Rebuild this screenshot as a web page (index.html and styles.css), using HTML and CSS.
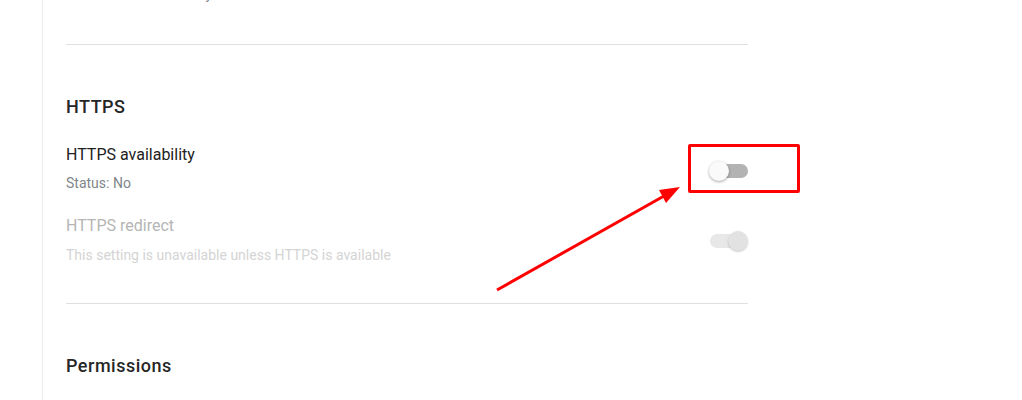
FILE: index.html
```html
<!DOCTYPE html>
<html lang="en">
<head>
    <meta charset="utf-8" />
    <title>Settings - HTTPS</title>
    <link rel="stylesheet" href="styles.css">
</head>
<body>
    <div class="page">
        <div class="rail"></div>

        <div class="main">
            <div class="cut-line">Redirects automatically</div>
            <hr class="divider" />

            <section class="group">
                <h2 class="group-title">HTTPS</h2>

                <div class="setting">
                    <div class="setting-text">
                        <div class="setting-name">HTTPS availability</div>
                        <div class="setting-desc">Status: No</div>
                    </div>
                    <div class="switch">
                        <span class="track"></span>
                        <span class="thumb"></span>
                    </div>
                </div>

                <div class="setting disabled">
                    <div class="setting-text">
                        <div class="setting-name">HTTPS redirect</div>
                        <div class="setting-desc">This setting is unavailable unless HTTPS is available</div>
                    </div>
                    <div class="switch on">
                        <span class="track"></span>
                        <span class="thumb"></span>
                    </div>
                </div>
            </section>

            <hr class="divider" />

            <section class="group">
                <h2 class="group-title">Permissions</h2>
            </section>
        </div>
    </div>

    <!-- screenshot annotation -->
    <div class="mark-box"></div>
    <svg class="mark-arrow" width="1022" height="400" viewBox="0 0 1022 400">
        <line x1="497" y1="290" x2="664" y2="196" stroke="#ff0000" stroke-width="3" />
        <polygon points="680,187 659,190 666,203" fill="#ff0000" />
    </svg>
</body>
</html>
```

FILE: styles.css
```css
body {
    margin: 0;
    background: #fff;
    font-family: Roboto, "Liberation Sans", sans-serif;
    color: #212121;
}

.page {
    display: flex;
    min-height: 400px;
}

.rail {
    width: 42px;
    border-right: 1px solid #ececec;
}

.main {
    width: 682px;
    padding-left: 23px;
}

.cut-line {
    margin-top: -16px;
    font-size: 14px;
    line-height: 20px;
    color: #80868b;
    height: 18px;
    overflow: hidden;
}

.divider {
    border: 0;
    border-top: 1px solid #e0e0e0;
    margin: 38px 0 0 0;
}

.cut-line + .divider {
    margin-top: 42px;
}

.group {
    padding-top: 50px;
}

.group-title {
    margin: 0;
    font-size: 18px;
    line-height: 24px;
    font-weight: 500;
    letter-spacing: 0.5px;
    color: #262626;
}

.setting {
    display: flex;
    align-items: center;
    justify-content: space-between;
    margin-top: 26px;
}

.setting + .setting {
    margin-top: 23px;
}

.setting-name {
    font-size: 16px;
    line-height: 20px;
}

.setting-desc {
    font-size: 14px;
    line-height: 20px;
    color: #80868b;
    margin-top: 8px;
}

.disabled .setting-name {
    color: #b5b5b5;
}

.disabled .setting-desc {
    color: #d4d4d4;
    margin-top: 9px;
}

.switch {
    position: relative;
    width: 39px;
    height: 20px;
    margin-top: 4px;
}

.track {
    position: absolute;
    left: 4px;
    right: 0;
    top: 3px;
    height: 14px;
    border-radius: 7px;
    background: #b3b3b3;
}

.thumb {
    position: absolute;
    left: 0;
    top: 0;
    width: 20px;
    height: 20px;
    border-radius: 50%;
    background: #fafafa;
    box-shadow: 0 1px 3px rgba(0, 0, 0, 0.35);
}

.switch.on .track {
    left: 1px;
    right: 8px;
    background: #e8e8e8;
}

.switch.on .thumb {
    left: auto;
    right: 0;
    background: #e2e2e2;
    box-shadow: 0 1px 2px rgba(0, 0, 0, 0.2);
}

.disabled .switch {
    margin-top: 0;
}

.mark-box {
    position: absolute;
    left: 688px;
    top: 144px;
    width: 106px;
    height: 43px;
    border: 3px solid #ff0000;
    border-radius: 2px;
}

.mark-arrow {
    position: absolute;
    left: 0;
    top: 0;
}
```
